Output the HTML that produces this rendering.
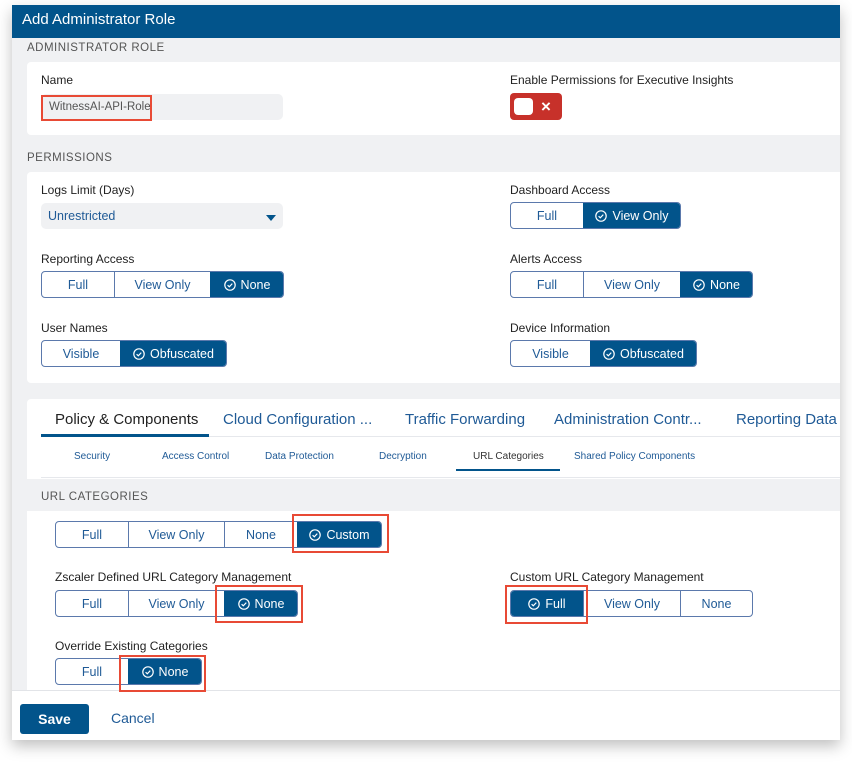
<!DOCTYPE html>
<html><head><meta charset="utf-8"><style>
*{box-sizing:border-box;margin:0;padding:0}
body{width:852px;height:768px;background:#fff;font-family:"Liberation Sans",sans-serif;position:relative;overflow:hidden}
.modal{position:absolute;left:12px;top:5px;width:828px;height:735px;background:#f0f1f3;box-shadow:0 6px 14px rgba(0,0,0,.25);overflow:hidden}
.hdr{position:absolute;left:0;top:0;width:100%;height:33px;background:#02548b;color:#fff;font-size:15px;padding:6px 0 0 10px}
.a{position:absolute}
.sec{position:absolute;font-size:11.5px;color:#555;letter-spacing:.5px}
.card{position:absolute;background:#fff;border-radius:4px}
.lbl{position:absolute;font-size:12px;color:#222}
.seg{position:absolute;display:flex;height:27px;border:1px solid #5b79ac;border-radius:4px;overflow:hidden}
.seg div{height:100%;display:flex;align-items:center;justify-content:center;font-size:12.5px;color:#1f5a96;border-left:1px solid #5b79ac}
.seg div:first-child{border-left:none}
.seg div.on{background:#02548b;color:#fff;border-left-color:#02548b}
.seg div.on svg{margin-right:5px}
.red{position:absolute;border:2px solid #e84a35;z-index:8}
.tab{position:absolute;font-size:15px;color:#1f5a96;top:411px}
.st{position:absolute;font-size:10px;color:#1f5a96;top:451px}
</style></head><body>
<div class="modal">
<div class="hdr">Add Administrator Role</div>
</div>
<div class="a" style="left:12px;top:5px;width:828px;height:735px;overflow:hidden">
<div class="sec" style="left:15px;top:37px">ADMINISTRATOR ROLE</div>
<div class="card" style="left:15px;top:57px;width:820px;height:73px"></div>
<div class="sec" style="left:15px;top:147px">PERMISSIONS</div>
<div class="card" style="left:15px;top:167px;width:820px;height:211px"></div>
<div class="card" style="left:15px;top:394px;width:820px;height:300px"></div>
</div>

<div class="lbl" style="left:41px;top:73px">Name</div>
<div class="a" style="left:41px;top:94px;width:242px;height:26px;background:#f0f1f3;border-radius:5px;font-size:11.5px;color:#555;padding:7px 0 0 8px">WitnessAI-API-Role</div>
<div class="red" style="left:41px;top:95px;width:111px;height:26px"></div>

<div class="lbl" style="left:510px;top:73px">Enable Permissions for Executive Insights</div>
<div class="a" style="left:510px;top:93px;width:52px;height:27px;background:#c7312a;border-radius:4px"></div>
<div class="a" style="left:514px;top:98px;width:19px;height:17px;background:#fff;border-radius:4px"></div>
<div class="a" style="left:541px;top:97px;color:#fff;font-size:17px;font-weight:bold">×</div>

<div class="lbl" style="left:41px;top:183px">Logs Limit (Days)</div>
<div class="a" style="left:41px;top:203px;width:242px;height:26px;background:#f0f1f3;border-radius:5px;font-size:12.5px;color:#1f5a96;padding:6px 0 0 7px">Unrestricted</div>
<div class="a" style="left:266px;top:215px;width:0;height:0;border-left:5px solid transparent;border-right:5px solid transparent;border-top:6px solid #02548b"></div>

<div class="lbl" style="left:510px;top:183px">Dashboard Access</div>
<div class="seg" style="left:510px;top:202px"><div style="width:72px">Full</div><div class="on" style="width:97px"><svg width="12" height="12" viewBox="0 0 12 12"><circle cx="6" cy="6" r="5.2" fill="none" stroke="#fff" stroke-width="1.2"/><path d="M3.6 6.2l1.7 1.6 3-3.2" fill="none" stroke="#fff" stroke-width="1.2"/></svg>View Only</div></div>

<div class="lbl" style="left:41px;top:252px">Reporting Access</div>
<div class="seg" style="left:41px;top:271px"><div style="width:72px">Full</div><div style="width:96px">View Only</div><div class="on" style="width:73px"><svg width="12" height="12" viewBox="0 0 12 12"><circle cx="6" cy="6" r="5.2" fill="none" stroke="#fff" stroke-width="1.2"/><path d="M3.6 6.2l1.7 1.6 3-3.2" fill="none" stroke="#fff" stroke-width="1.2"/></svg>None</div></div>

<div class="lbl" style="left:510px;top:252px">Alerts Access</div>
<div class="seg" style="left:510px;top:271px"><div style="width:72px">Full</div><div style="width:97px">View Only</div><div class="on" style="width:72px"><svg width="12" height="12" viewBox="0 0 12 12"><circle cx="6" cy="6" r="5.2" fill="none" stroke="#fff" stroke-width="1.2"/><path d="M3.6 6.2l1.7 1.6 3-3.2" fill="none" stroke="#fff" stroke-width="1.2"/></svg>None</div></div>

<div class="lbl" style="left:41px;top:321px">User Names</div>
<div class="seg" style="left:41px;top:340px"><div style="width:78px">Visible</div><div class="on" style="width:106px"><svg width="12" height="12" viewBox="0 0 12 12"><circle cx="6" cy="6" r="5.2" fill="none" stroke="#fff" stroke-width="1.2"/><path d="M3.6 6.2l1.7 1.6 3-3.2" fill="none" stroke="#fff" stroke-width="1.2"/></svg>Obfuscated</div></div>

<div class="lbl" style="left:510px;top:321px">Device Information</div>
<div class="seg" style="left:510px;top:340px"><div style="width:79px">Visible</div><div class="on" style="width:106px"><svg width="12" height="12" viewBox="0 0 12 12"><circle cx="6" cy="6" r="5.2" fill="none" stroke="#fff" stroke-width="1.2"/><path d="M3.6 6.2l1.7 1.6 3-3.2" fill="none" stroke="#fff" stroke-width="1.2"/></svg>Obfuscated</div></div>

<div class="tab" style="left:55px;color:#222">Policy &amp; Components</div>
<div class="tab" style="left:223px">Cloud Configuration ...</div>
<div class="tab" style="left:405px">Traffic Forwarding</div>
<div class="tab" style="left:554px">Administration Contr...</div>
<div class="tab" style="left:736px">Reporting Data</div>
<div class="a" style="left:41px;top:436px;width:799px;height:1px;background:#e6e8ec"></div>
<div class="a" style="left:41px;top:434px;width:168px;height:3px;background:#02548b"></div>

<div class="st" style="left:74px">Security</div>
<div class="st" style="left:162px">Access Control</div>
<div class="st" style="left:265px">Data Protection</div>
<div class="st" style="left:379px">Decryption</div>
<div class="st" style="left:473px;color:#333">URL Categories</div>
<div class="st" style="left:574px">Shared Policy Components</div>
<div class="a" style="left:41px;top:477px;width:799px;height:1px;background:#e6e8ec"></div>
<div class="a" style="left:456px;top:469px;width:104px;height:2px;background:#02548b"></div>

<div class="a" style="left:27px;top:479px;width:813px;height:32px;background:#f0f1f3"></div>
<div class="sec" style="left:41px;top:491px">URL CATEGORIES</div>
<div class="a" style="left:41px;top:511px;width:799px;height:177px;background:#fff;border-radius:4px 0 0 0"></div>

<div class="seg" style="left:55px;top:521px"><div style="width:72px">Full</div><div style="width:96px">View Only</div><div style="width:73px">None</div><div class="on" style="width:84px"><svg width="12" height="12" viewBox="0 0 12 12"><circle cx="6" cy="6" r="5.2" fill="none" stroke="#fff" stroke-width="1.2"/><path d="M3.6 6.2l1.7 1.6 3-3.2" fill="none" stroke="#fff" stroke-width="1.2"/></svg>Custom</div></div>
<div class="red" style="left:292px;top:514px;width:97px;height:39px"></div>

<div class="lbl" style="left:55px;top:570px">Zscaler Defined URL Category Management</div>
<div class="seg" style="left:55px;top:590px"><div style="width:72px">Full</div><div style="width:96px">View Only</div><div class="on" style="width:73px"><svg width="12" height="12" viewBox="0 0 12 12"><circle cx="6" cy="6" r="5.2" fill="none" stroke="#fff" stroke-width="1.2"/><path d="M3.6 6.2l1.7 1.6 3-3.2" fill="none" stroke="#fff" stroke-width="1.2"/></svg>None</div></div>
<div class="red" style="left:215px;top:585px;width:88px;height:38px"></div>

<div class="lbl" style="left:510px;top:570px">Custom URL Category Management</div>
<div class="seg" style="left:510px;top:590px"><div class="on" style="width:72px"><svg width="12" height="12" viewBox="0 0 12 12"><circle cx="6" cy="6" r="5.2" fill="none" stroke="#fff" stroke-width="1.2"/><path d="M3.6 6.2l1.7 1.6 3-3.2" fill="none" stroke="#fff" stroke-width="1.2"/></svg>Full</div><div style="width:97px">View Only</div><div style="width:72px">None</div></div>
<div class="red" style="left:505px;top:585px;width:83px;height:39px"></div>

<div class="lbl" style="left:55px;top:639px">Override Existing Categories</div>
<div class="seg" style="left:55px;top:658px"><div style="width:72px">Full</div><div class="on" style="width:73px"><svg width="12" height="12" viewBox="0 0 12 12"><circle cx="6" cy="6" r="5.2" fill="none" stroke="#fff" stroke-width="1.2"/><path d="M3.6 6.2l1.7 1.6 3-3.2" fill="none" stroke="#fff" stroke-width="1.2"/></svg>None</div></div>
<div class="red" style="left:119px;top:655px;width:87px;height:37px"></div>

<div class="a" style="left:12px;top:690px;width:828px;height:50px;background:#fff;border-top:1px solid #e2e4e8;z-index:6"></div>
<div class="a" style="left:20px;top:704px;width:69px;height:30px;background:#02548b;border-radius:3px;color:#fff;font-size:14px;font-weight:bold;text-align:center;line-height:30px;z-index:7">Save</div>
<div class="a" style="left:111px;top:710px;color:#1f5a96;font-size:14px;z-index:7">Cancel</div>
</body></html>
